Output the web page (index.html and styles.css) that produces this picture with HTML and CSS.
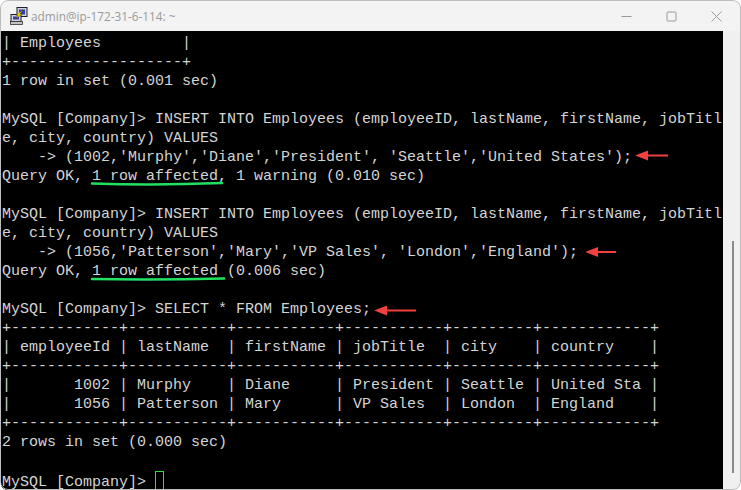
FILE: index.html
```html
<!DOCTYPE html>
<html lang="en">
<head>
<meta charset="utf-8">
<title>admin@ip-172-31-6-114: ~</title>
<link rel="stylesheet" href="styles.css">
</head>
<body>
<div class="window">
  <header class="titlebar">
    <svg class="app-icon" width="20" height="20" viewBox="0 0 20 20">
      <rect x="8" y="1.5" width="10" height="9" fill="#cfd3dc" stroke="#1c1c2c"/>
      <rect x="10" y="3.5" width="6" height="5" fill="#3a3ab8"/>
      <rect x="2" y="8.5" width="10" height="7" fill="#cfd3dc" stroke="#1c1c2c"/>
      <rect x="4" y="10.5" width="6" height="3" fill="#3a3ab8"/>
      <rect x="1.5" y="15.5" width="12" height="3" fill="#c4c4c4" stroke="#333" stroke-width=".8"/>
      <path d="M14 4 L11 8 L13 8 L7 13 L9 9.5 L7 9.5 L10 6.5 Z" fill="#f2d400" stroke="#3a3000" stroke-width=".4"/>
    </svg>
    <span class="title">admin@ip-172-31-6-114: ~</span>
    <div class="controls">
      <svg width="11" height="11" viewBox="0 0 11 11"><path d="M0.5 5.5H10.5" stroke="#999" fill="none"/></svg>
      <svg width="11" height="11" viewBox="0 0 11 11"><rect x="1" y="1" width="9" height="9" rx="1" stroke="#999" fill="none"/></svg>
      <svg width="11" height="11" viewBox="0 0 11 11"><path d="M.5 .5L10.5 10.5M10.5 .5L.5 10.5" stroke="#999" fill="none"/></svg>
    </div>
  </header>
  <div class="body">
<pre class="terminal">| Employees         |
+-------------------+
1 row in set (0.001 sec)

MySQL [Company]&gt; INSERT INTO Employees (employeeID, lastName, firstName, jobTitl
e, city, country) VALUES
    -&gt; (1002,'Murphy','Diane','President', 'Seattle','United States');
Query OK, 1 row affected, 1 warning (0.010 sec)

MySQL [Company]&gt; INSERT INTO Employees (employeeID, lastName, firstName, jobTitl
e, city, country) VALUES
    -&gt; (1056,'Patterson','Mary','VP Sales', 'London','England');
Query OK, 1 row affected (0.006 sec)

MySQL [Company]&gt; SELECT * FROM Employees;
+------------+-----------+-----------+-----------+---------+------------+
| employeeId | lastName  | firstName | jobTitle  | city    | country    |
+------------+-----------+-----------+-----------+---------+------------+
|       1002 | Murphy    | Diane     | President | Seattle | United Sta |
|       1056 | Patterson | Mary      | VP Sales  | London  | England    |
+------------+-----------+-----------+-----------+---------+------------+
2 rows in set (0.000 sec)

MySQL [Company]&gt; <span class="cursor"></span></pre>
    <div class="scrollbar"><div class="thumb"></div></div>
    <svg class="marks" width="741" height="459" viewBox="0 31 741 459">
      <g class="green">
        <path d="M92 184.5 Q155 186.5 222 184"/>
        <path d="M92 280 Q155 281 224 279.5"/>
      </g>
      <g class="red">
        <path d="M642 156.5H668"/><path d="M638 156.5L647 153V160Z"/>
        <path d="M592 253H616"/><path d="M588 253L597 249.5V256.5Z"/>
        <path d="M381 311.5H416"/><path d="M377 311.5L386 308V315Z"/>
      </g>
    </svg>
  </div>
</div>
</body>
</html>
```
FILE: styles.css
```css
html, body {
  margin: 0;
  padding: 0;
  background: #fff;
}
.window {
  position: relative;
  width: 741px;
  height: 490px;
  box-sizing: border-box;
  padding: 1px 1px 0;
  border-radius: 8px;
  background: #f0f0f0;
  overflow: hidden;
  display: flex;
  flex-direction: column;
}
.window::after {
  content: "";
  position: absolute;
  inset: 0;
  border: 1px solid #bdbdbd;
  border-radius: 8px;
  pointer-events: none;
}
.titlebar {
  height: 30px;
  flex: none;
  background: #f3f3f3;
  display: flex;
  align-items: center;
  padding-left: 8px;
}
.app-icon {
  flex: none;
  margin-right: 2px;
}
.title {
  font: 11.8px "Open Sans", sans-serif;
  color: #9a9a9a;
}
.controls {
  margin-left: auto;
  display: flex;
  gap: 34px;
  padding-right: 18px;
}
.body {
  flex: 1;
  display: flex;
  position: relative;
  min-height: 0;
}
.terminal {
  flex: none;
  width: 722px;
  margin: 0;
  padding: 3px 0 0 1px;
  box-sizing: border-box;
  background: #000;
  color: #d4d4d4;
  font: 15px/19px "Liberation Mono", monospace;
  overflow: hidden;
  white-space: pre;
}
.cursor {
  display: inline-block;
  width: 7px;
  height: 17px;
  border: 1px solid #22e03a;
  vertical-align: -4px;
}
.scrollbar {
  flex: 1;
  position: relative;
}
.thumb {
  position: absolute;
  left: 9px;
  top: 210px;
  bottom: 17px;
  width: 2px;
  background: #8a8a8a;
}
.marks {
  position: absolute;
  left: -1px;
  top: -1px;
  pointer-events: none;
}
.green path {
  fill: none;
  stroke: #22e060;
  stroke-width: 2.5;
  stroke-linecap: round;
}
.red path {
  fill: #f04040;
  stroke: #f04040;
  stroke-width: 2;
}
```
